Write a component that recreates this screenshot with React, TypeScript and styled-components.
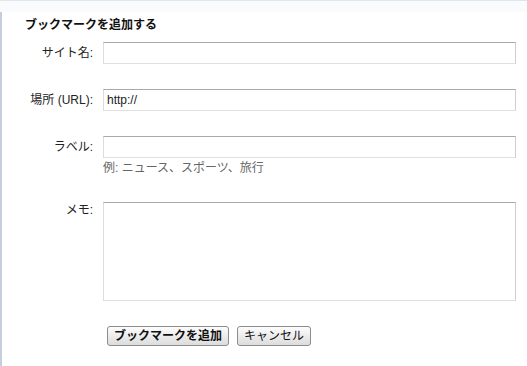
import React from "react";
import styled, { createGlobalStyle } from "styled-components";

const Global = createGlobalStyle`
  html, body { margin: 0; padding: 0; background: #fff; }
  body {
    font-family: "Liberation Sans", "Noto Sans CJK JP", sans-serif;
    font-size: 12px;
    color: #222;
  }
  * { box-sizing: border-box; }
`;

const Page = styled.div`
  min-height: 100vh;
  border-top: 1px solid #dfe5ee;
  background: linear-gradient(#fafbfd, #fafbfd) top / 100% 11px no-repeat, #fff;
  padding-top: 11px;
  display: flex;
  flex-direction: column;
`;

const Panel = styled.div`
  flex: 1;
  border-left: 2px solid #c4cedc;
  background: #fff;
  padding: 5px 0 0 23px;
`;

const Title = styled.h1`
  margin: 0 0 9px;
  font-size: 12px;
  line-height: 16px;
  font-weight: bold;
  color: #111;
`;

const Row = styled.div`
  display: grid;
  grid-template-columns: 68px 413px;
  column-gap: 10px;
  align-items: start;
  margin-bottom: 25px;
`;

const Label = styled.label<{ $offset?: number }>`
  text-align: right;
  line-height: 16px;
  padding-top: ${(p) => p.$offset ?? 3}px;
  white-space: nowrap;
  color: #222;
`;

const Field = styled.div`
  display: flex;
  flex-direction: column;
`;

const TextInput = styled.input`
  height: 22px;
  width: 100%;
  margin: 0;
  padding: 0 3px;
  font: inherit;
  color: #222;
  border: 1px solid;
  border-color: #a9a9a9 #cfcfcf #e0e0e0 #dcdcdc;
  background: #fff;
  outline: none;
`;

const Hint = styled.div`
  line-height: 18px;
  color: #666;
  margin-top: 1px;
`;

const Memo = styled.textarea`
  height: 99px;
  width: 100%;
  margin: 0;
  padding: 3px;
  font: inherit;
  resize: none;
  border: 1px solid;
  border-color: #a9a9a9 #cfcfcf #e0e0e0 #dcdcdc;
  background: #fff;
  outline: none;
`;

const Actions = styled.div`
  display: flex;
  gap: 8px;
  padding-left: 82px;
  margin-top: 1px;
`;

const Button = styled.button<{ $primary?: boolean }>`
  height: 20px;
  padding: 0 6px;
  margin: 0;
  font-family: inherit;
  font-size: 12px;
  line-height: 18px;
  font-weight: ${(p) => (p.$primary ? "bold" : "normal")};
  color: #111;
  border: 1px solid #8c8c8c;
  border-radius: 3px;
  background: linear-gradient(#fdfdfd, #ececec 50%, #dcdcdc);
  cursor: pointer;
`;

export default function App() {
  return (
    <>
      <Global />
      <Page>
        <Panel>
          <Title>ブックマークを追加する</Title>
          <Row>
            <Label>サイト名:</Label>
            <TextInput type="text" />
          </Row>
          <Row>
            <Label>場所 (URL):</Label>
            <TextInput type="text" defaultValue="http://" />
          </Row>
          <Row>
            <Label>ラベル:</Label>
            <Field>
              <TextInput type="text" />
              <Hint>例: ニュース、スポーツ、旅行</Hint>
            </Field>
          </Row>
          <Row>
            <Label $offset={0}>メモ:</Label>
            <Memo />
          </Row>
          <Actions>
            <Button $primary>ブックマークを追加</Button>
            <Button>キャンセル</Button>
          </Actions>
        </Panel>
      </Page>
    </>
  );
}
